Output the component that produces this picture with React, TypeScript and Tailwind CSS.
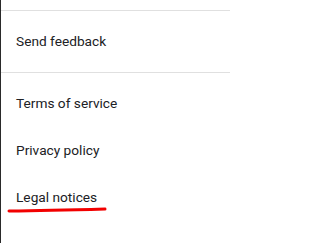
export default function App() {
  const legalLinks = ['Terms of service', 'Privacy policy', 'Legal notices']

  return (
    <div
      className="w-[230px] h-[243px] bg-white border-l border-[#2a2a2a] overflow-hidden text-[13.7px] text-[#202124]"
      style={{ fontFamily: 'Roboto, "Noto Sans", sans-serif' }}
    >
      <div className="h-[10px]"></div>

      {/* Feedback section */}
      <div className="border-t border-[#e0e0e0]">
        <div className="h-[61px] flex items-center pl-[15px]">Send feedback</div>
      </div>

      {/* Legal section */}
      <div className="border-t border-[#e0e0e0] pt-[7px]">
        {legalLinks.map((label) => (
          <div key={label} className="relative h-[47px] flex items-center pl-[15px]">
            {label}
            {label === 'Legal notices' && (
              <svg
                className="absolute left-[6px] top-[33px]"
                width="100"
                height="6"
                viewBox="0 0 100 6"
              >
                <path
                  d="M2 4 Q 40 3.6 98 2"
                  stroke="#f20000"
                  strokeWidth="3"
                  strokeLinecap="round"
                  fill="none"
                />
              </svg>
            )}
          </div>
        ))}
      </div>
    </div>
  )
}
